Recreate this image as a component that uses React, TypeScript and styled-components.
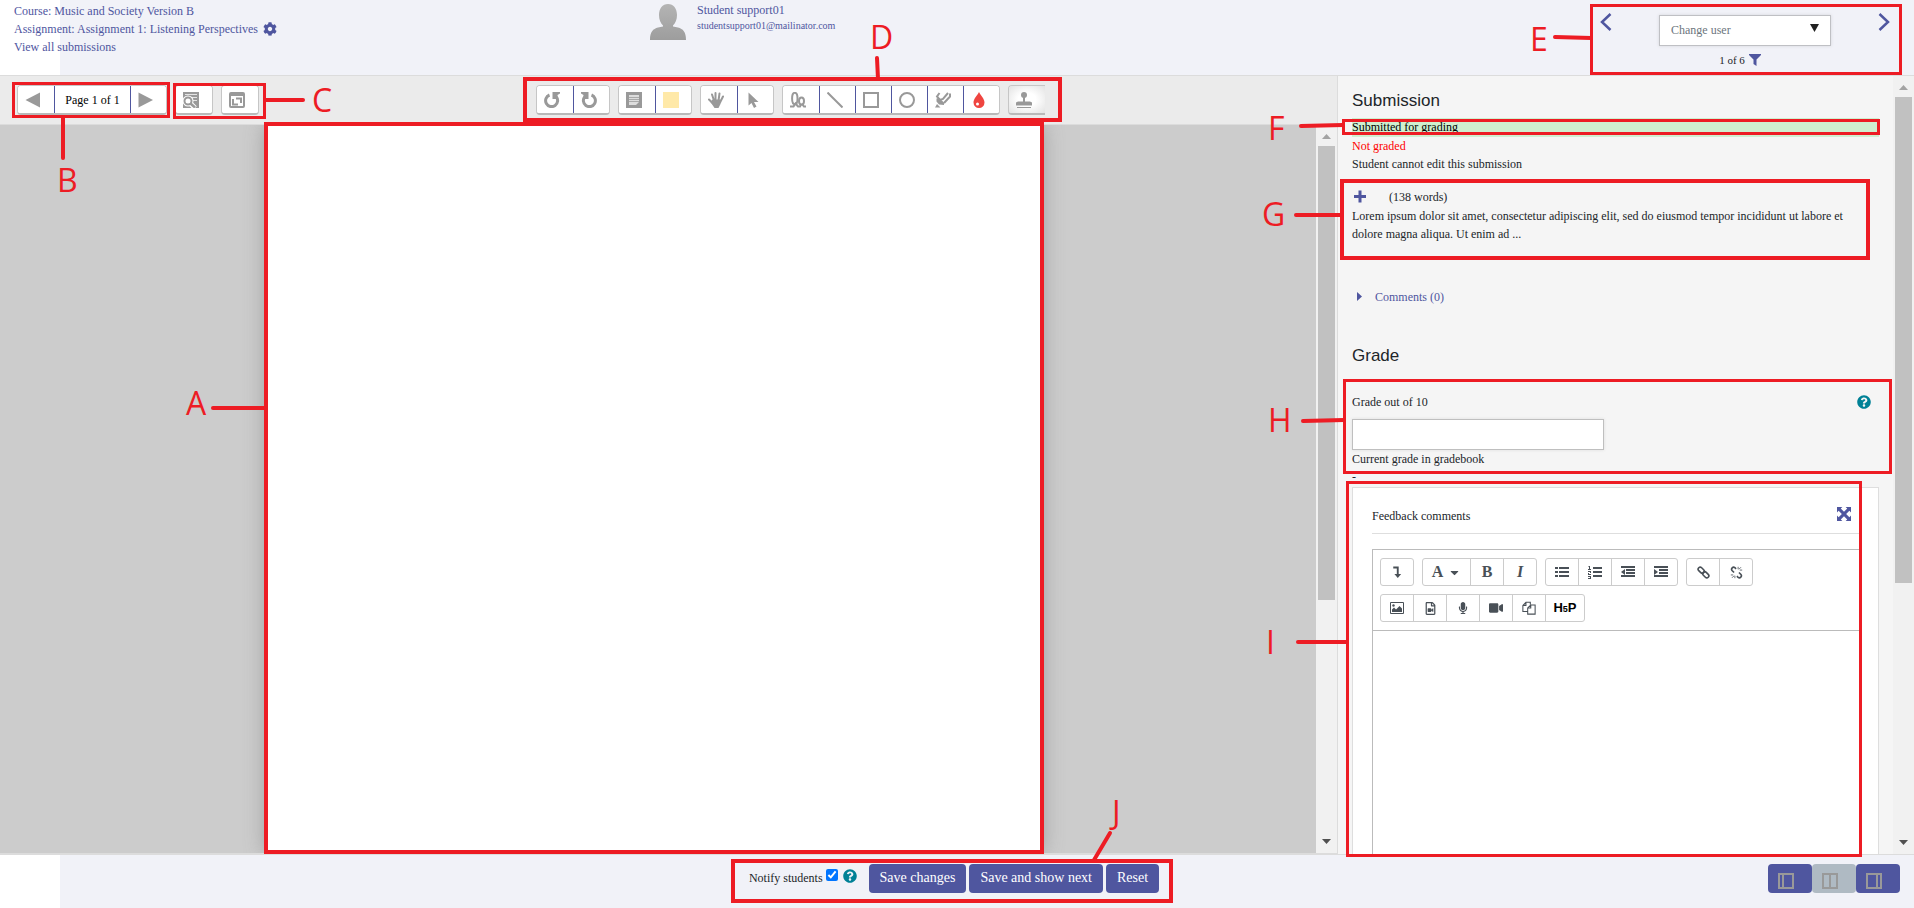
import React from "react";
import styled, { createGlobalStyle, css } from "styled-components";
import {
  FaCog,
  FaFilter,
  FaQuestionCircle,
  FaMicrophone,
  FaVideo,
  FaRegFileVideo,
  FaCaretDown,
  FaCaretRight,
} from "react-icons/fa";

const SERIF = `"Liberation Serif", "Times New Roman", serif`;
const INDIGO = "#4f569f";
const RED = "#ed1c24";

const GlobalStyle = createGlobalStyle`
  *, *::before, *::after { box-sizing: border-box; }
  body {
    margin: 0;
    font: 12px/18px ${SERIF};
    color: #212529;
    background: #fff;
  }
  a { color: ${INDIGO}; text-decoration: none; }
  button, input, select { font: inherit; margin: 0; }
  h2, p { margin: 0; }
  svg { display: block; flex: none; }
`;

/* ---------- Page frame ---------- */

const Page = styled.div`
  position: relative;
  display: flex;
  flex-direction: column;
  height: 100vh;
  overflow: hidden;
`;

const barFill = css`
  background: linear-gradient(to right, #fff 60px, #f1f2f8 60px);
`;

const Header = styled.header`
  ${barFill}
  display: grid;
  grid-template-columns: repeat(3, 1fr);
  height: 76px;
  flex: none;
  border-bottom: 1px solid #dcdcdc;
`;

const Crumbs = styled.nav`
  display: flex;
  flex-direction: column;
  padding: 2px 0 0 14px;
`;

const CrumbRow = styled.div`
  display: flex;
  align-items: center;
  gap: 5px;
  height: 18px;
`;

const Student = styled.div`
  display: flex;
  gap: 11px;
  padding: 4px 0 0 12px;
`;

const StudentText = styled.div`
  display: flex;
  flex-direction: column;
  margin-top: -3px;
`;

const Email = styled.a`
  font-size: 10px;
  line-height: 14px;
`;

const UserNav = styled.div`
  display: flex;
  justify-content: space-between;
  justify-self: end;
  width: 290px;
  margin-right: 24px;
  padding-top: 12px;
`;

const IconLink = styled.a`
  display: block;
  height: max-content;
`;

const Picker = styled.div`
  display: flex;
  flex-direction: column;
  align-items: center;
  margin-top: 3px;
`;

const SelectWrap = styled.div`
  position: relative;
  display: flex;
  width: 172px;
`;

const UserSelect = styled.select`
  appearance: none;
  width: 100%;
  height: 31px;
  padding: 0 11px 1px;
  border: 1px solid #bfc0c4;
  border-radius: 0;
  background: #fff;
  box-shadow: 0 0 3px #d4d4da;
  color: #6c757d;
`;

const SelectArrow = styled.svg`
  position: absolute;
  right: 12px;
  top: 9px;
  pointer-events: none;
`;

const Counter = styled.div`
  display: flex;
  align-items: center;
  gap: 4px;
  margin: 5px 10px 0 0;
  font-size: 11px;
`;

/* ---------- Main split ---------- */

const Main = styled.main`
  display: grid;
  grid-template-columns: minmax(0, 1fr) 577px;
  flex: 1;
  min-height: 0;
`;

const Viewer = styled.section`
  display: flex;
  flex-direction: column;
  min-height: 0;
`;

const Toolbar = styled.div`
  display: grid;
  grid-template-columns: 40% 1fr;
  align-items: center;
  height: 49px;
  flex: none;
  background: #ebebeb;
  border-bottom: 1px solid #dcdcdc;
`;

const Tools = styled.div<{ $inset: number }>`
  display: flex;
  gap: 8px;
  padding-left: ${(p) => p.$inset}px;
`;

const Group = styled.div<{ $open?: boolean }>`
  display: flex;
  height: 30px;
  border: 1px solid #c6c6c6;
  border-bottom: 2px solid #b9b9b9;
  border-radius: 4px;
  background: #fff;
  overflow: hidden;
  && > * + * { border-left: 1px solid ${INDIGO}; }
  ${(p) => p.$open && "border-right: 0; border-radius: 4px 0 0 4px;"}
`;

const Tool = styled.button<{ $pressed?: boolean }>`
  display: flex;
  align-items: center;
  width: 36px;
  padding: 0 0 0 7px;
  border: 0;
  background: ${(p) => (p.$pressed ? "radial-gradient(#fff 35%, #e2e2e2)" : "#fff")};
  color: #999;
`;

const PageLabel = styled.span`
  display: flex;
  align-items: center;
  justify-content: center;
  width: 76px;
  color: #000;
`;

const Workspace = styled.div`
  display: flex;
  flex: 1;
  min-height: 0;
  border-bottom: 1px solid #dcdcdc;
`;

const Desk = styled.div`
  display: flex;
  justify-content: center;
  flex: 1;
  padding-right: 8px;
  background: #ccc;
  overflow: hidden;
`;

const Sheet = styled.div`
  width: 776px;
  background: #fff;
  box-shadow: 0 0 20px #999;
`;

const Scroll = styled.div`
  display: flex;
  flex-direction: column;
  align-items: center;
  width: 21px;
  flex: none;
  padding: 9px 0;
  background: #f1f1f1;
`;

const Thumb = styled.div<{ $share: number }>`
  width: 17px;
  height: ${(p) => p.$share}%;
  margin: 7px 0 auto;
  background: #c1c1c1;
`;

/* ---------- Grading panel ---------- */

const Side = styled.aside`
  display: flex;
  min-height: 0;
  border-left: 1px solid #dcdcdc;
  background: #f5f5f5;
  overflow: hidden;
`;

const SideBody = styled.div`
  flex: 1;
  padding: 15px 14px 0 14px;
  overflow: hidden;
`;

const Heading = styled.h2`
  font: 400 17px/20px "Liberation Sans", Arial, sans-serif;
`;

const Status = styled.p<{ $tone?: "ok" | "bad" }>`
  ${(p) => p.$tone === "ok" && "margin-top: 7px; padding-bottom: 1px; background: #cfefcf; color: #000;"}
  ${(p) => p.$tone === "bad" && "color: #f00;"}
`;

const WordCount = styled.div`
  display: flex;
  align-items: center;
  gap: 23px;
  height: 20px;
  margin-top: 14px;
  padding-left: 2px;
`;

const Excerpt = styled.p`
  padding-right: 24px;
`;

const CommentsLink = styled.a`
  display: flex;
  align-items: center;
  gap: 9px;
  margin: 45px 0 40px;
  padding-left: 4px;
`;

const GradeRow = styled.div`
  display: flex;
  align-items: center;
  justify-content: space-between;
  height: 18px;
  margin: 27px 8px 8px 0;
`;

const HelpLink = styled.a`
  color: #008196;
`;

const GradeInput = styled.input`
  display: block;
  width: 252px;
  height: 31px;
  padding: 0 8px;
  border: 1px solid #bfbfbf;
  background: #fff;
  box-shadow: 0 0 3px #ddd;
`;

const Card = styled.section`
  margin-top: 1px;
  padding: 19px 18px 0 19px;
  border: 1px solid #dedede;
  background: #fff;
`;

const CardHead = styled.div`
  display: flex;
  justify-content: space-between;
  height: 27px;
  padding: 0 9px 0 0;
  border-bottom: 1px solid #dedede;
`;

const Editor = styled.div`
  margin-top: 15px;
  border: 1px solid #bbb;
`;

const EditorBar = styled.div`
  display: flex;
  flex-direction: column;
  gap: 8px;
  height: 81px;
  padding: 8px 7px;
  border-bottom: 1px solid #bbb;
`;

const EditorRow = styled.div`
  display: flex;
  gap: 8px;
`;

const EditorGroup = styled.div`
  display: flex;
  height: 28px;
  border: 1px solid #ccc;
  border-radius: 3px;
  && > * + * { border-left: 1px solid #ccc; }
`;

const EditorButton = styled.button<{ $wide?: number }>`
  display: flex;
  align-items: center;
  justify-content: center;
  gap: 5px;
  width: ${(p) => p.$wide ?? 33}px;
  padding: 0;
  border: 0;
  background: none;
  color: #495057;
  &:first-child { width: ${(p) => p.$wide ?? 32}px; }
`;

const Glyph = styled.span<{ $italic?: boolean }>`
  font-size: 16px;
  font-weight: 700;
  font-style: ${(p) => (p.$italic ? "italic" : "normal")};
`;

const H5P = styled.span`
  font: 900 13px/18px "Liberation Sans", Arial, sans-serif;
  color: #000;
  & > small { font-size: 9px; }
`;

const EditorText = styled.div`
  height: 320px;
  outline: 0;
`;

/* ---------- Footer ---------- */

const Footer = styled.footer`
  ${barFill}
  display: grid;
  grid-template-columns: 1fr auto 1fr;
  align-items: start;
  height: 54px;
  flex: none;
  padding: 9px 14px 0 8px;
  border-top: 1px solid #dcdcdc;
`;

const Actions = styled.div`
  grid-column: 2;
  display: flex;
  gap: 3px;
`;

const Notify = styled.div`
  display: flex;
  gap: 5px;
  padding: 5px 9px 0 0;
`;

const NotifyLabel = styled.label`
  display: flex;
  gap: 3px;
`;

const Tick = styled.input`
  width: 12px;
  height: 12px;
  accent-color: #0075ff;
`;

const Primary = styled.button`
  height: 29px;
  padding: 0 11px 1px;
  border: 0;
  border-radius: 4px;
  background: ${INDIGO};
  color: #fff;
  font-size: 14px;
`;

const Layouts = styled.div`
  display: flex;
  justify-self: end;
`;

const LayoutButton = styled.button<{ $current?: boolean }>`
  display: flex;
  align-items: center;
  width: 44px;
  height: 29px;
  padding: 4px 0 0 10px;
  border: 0;
  border-radius: 4px;
  background: ${(p) => (p.$current ? "#afbac3" : INDIGO)};
  color: #999;
`;

/* ---------- Callouts ---------- */

const Callouts = styled.div`
  position: absolute;
  inset: 0;
  overflow: hidden;
  pointer-events: none;
`;

const Leaders = styled.svg`
  position: absolute;
  left: 0;
  top: 0;
`;

type Box = [x: number, y: number, w: number, h: number, stroke: number];

const Frame = styled.div<{ $box: Box }>`
  position: absolute;
  left: ${(p) => p.$box[0]}px;
  top: ${(p) => p.$box[1]}px;
  width: ${(p) => p.$box[2]}px;
  height: ${(p) => p.$box[3]}px;
  border: ${(p) => p.$box[4]}px solid ${RED};
`;

const Letter = styled.span<{ $x: number; $y: number }>`
  position: absolute;
  left: ${(p) => p.$x}px;
  top: ${(p) => p.$y}px;
  font: 400 32px/32px "Open Sans", "Noto Sans", sans-serif;
  color: ${RED};
`;

const callouts: {
  name: string;
  box: Box;
  letter: [number, number];
  line: [number, number, number, number];
}[] = [
  { name: "A", box: [264, 122, 780, 732, 4], letter: [186, 387], line: [213, 408, 266, 408] },
  { name: "B", box: [12, 82, 158, 36, 3], letter: [57, 164], line: [63, 117, 63, 158] },
  { name: "C", box: [173, 83, 93, 36, 3], letter: [312, 84], line: [265, 100, 303, 100] },
  { name: "D", box: [523, 77, 539, 45, 4], letter: [870, 21], line: [877, 58, 878, 79] },
  { name: "E", box: [1590, 4, 312, 71, 3], letter: [1530, 23], line: [1555, 37, 1591, 38] },
  { name: "F", box: [1342, 119, 538, 16, 3], letter: [1268, 112], line: [1301, 126, 1343, 125] },
  { name: "G", box: [1340, 179, 530, 81, 4], letter: [1262, 198], line: [1296, 215, 1342, 215] },
  { name: "H", box: [1343, 379, 549, 95, 3], letter: [1268, 404], line: [1303, 421, 1344, 420] },
  { name: "I", box: [1346, 481, 516, 376, 3], letter: [1266, 626], line: [1298, 642, 1347, 642] },
  { name: "J", box: [731, 859, 442, 44, 4], letter: [1112, 796], line: [1110, 833, 1094, 860] },
];

/* ---------- Small drawings ---------- */

const Ico = ({ children, size = 16 }: { children: React.ReactNode; size?: number }) => (
  <svg width={size} height={size} viewBox="0 0 16 16" fill="none" stroke="currentColor" aria-hidden>
    {children}
  </svg>
);

const TextIcon = ({ lines, fill }: { lines: string; fill?: string }) => (
  <svg width="14" height="13" viewBox="0 0 14 13" fill="none" stroke="currentColor" aria-hidden>
    <path d={lines} strokeWidth="2" />
    {fill && <path d={fill} fill="currentColor" stroke="none" />}
  </svg>
);

const Triangle = ({ d, fill }: { d: string; fill: string }) => (
  <svg width="9" height="5" viewBox="0 0 9 5" aria-hidden>
    <path d={d} fill={fill} />
  </svg>
);

const Avatar = () => (
  <svg width="36" height="36" viewBox="0 0 36 36" role="img" aria-label="Student picture">
    <defs>
      <linearGradient id="avatar" x1="0" y1="0" x2="0" y2="1">
        <stop offset="0" stopColor="#b4b4b4" />
        <stop offset="1" stopColor="#9d9d9d" />
      </linearGradient>
    </defs>
    <path
      fill="url(#avatar)"
      d="M18 0c5.500 0 9 4.500 9 11 0 4.500-1.500 8-4 10.500v1l5 1c5 1.500 8 4 8 12.500H0c0-8.500 3-11 8-12.500l5-1v-1c-2.500-2.500-4-6-4-10.500C9 4.500 12.500 0 18 0z"
    />
  </svg>
);

const Chevron = ({ d }: { d: string }) => (
  <svg width="12" height="20" viewBox="0 0 12 20" fill="none" stroke={INDIGO} strokeWidth="2.500" aria-hidden>
    <path d={d} />
  </svg>
);

const Expand = () => (
  <svg width="14" height="14" viewBox="0 0 13 13" fill="currentColor" aria-hidden>
    <path d="M0 0h5L3.500 1.500 6.500 4.500 9.500 1.500 8 0h5v5l-1.500-1.500-3 3 3 3L13 8v5H8l1.500-1.500-3-3-3 3L5 13H0V8l1.500 1.500 3-3-3-3L0 5z" />
  </svg>
);

const ScrollBar = ({ share }: { share: number }) => (
  <Scroll>
    <Triangle d="M4.500 0L9 5H0z" fill="#a3a3a3" />
    <Thumb $share={share} />
    <Triangle d="M0 0h9L4.500 5z" fill="#505050" />
  </Scroll>
);

const Help = () => (
  <HelpLink href="#help" aria-label="Help">
    <FaQuestionCircle size={14} />
  </HelpLink>
);

/* ---------- Sections ---------- */

const PageHeader = () => (
  <Header>
    <Crumbs>
      <CrumbRow>
        <a href="#course">Course: Music and Society Version B</a>
      </CrumbRow>
      <CrumbRow>
        <a href="#assignment">Assignment: Assignment 1: Listening Perspectives</a>
        <a href="#settings" aria-label="Settings">
          <FaCog size={14} />
        </a>
      </CrumbRow>
      <CrumbRow>
        <a href="#submissions">View all submissions</a>
      </CrumbRow>
    </Crumbs>
    <Student>
      <Avatar />
      <StudentText>
        <a href="#student">Student support01</a>
        <Email href="#mail">studentsupport01@mailinator.com</Email>
      </StudentText>
    </Student>
    <UserNav>
      <IconLink href="#previous" aria-label="Previous user">
        <Chevron d="M10.500 2L2 10l8.500 8" />
      </IconLink>
      <Picker>
        <SelectWrap>
          <UserSelect aria-label="Change user" defaultValue="">
            <option value="">Change user</option>
          </UserSelect>
          <SelectArrow width="9" height="8" viewBox="0 0 9 8" aria-hidden>
            <path d="M0 0h9L4.500 8z" fill="#212121" />
          </SelectArrow>
        </SelectWrap>
        <Counter>
          <span>1 of 6</span>
          <a href="#filter" aria-label="Filter">
            <svg width="12" height="12" viewBox="0 0 12 12" fill="currentColor" aria-hidden>
              <path d="M0 0h12v1L7.500 5.500V12L4.500 10V5.500L0 1z" />
            </svg>
          </a>
        </Counter>
      </Picker>
      <IconLink href="#next" aria-label="Next user">
        <Chevron d="M1.500 2L10 10l-8.500 8" />
      </IconLink>
    </UserNav>
  </Header>
);

const ViewerToolbar = () => (
  <Toolbar>
    <Tools $inset={17}>
      <Group>
        <Tool aria-label="Previous page">
          <Ico><path d="M15 0.500v15L0.500 8z" fill="currentColor" stroke="none" /></Ico>
        </Tool>
        <PageLabel>Page 1 of 1</PageLabel>
        <Tool aria-label="Next page">
          <Ico><path d="M0.500 0.500v15L15 8z" fill="currentColor" stroke="none" /></Ico>
        </Tool>
      </Group>
      <Group>
        <Tool aria-label="Search comments">
          <Ico>
            <path d="M0 0h16v16H0z" fill="currentColor" stroke="none" />
            <path d="M2 2.500h12M7 5.500h7M10 8.500h4" stroke="#e4e4e4" />
            <path d="M8 12l4 4" stroke="#fff" strokeWidth="5" />
            <circle cx="5" cy="9" r="5.500" fill="#fff" stroke="none" />
            <circle cx="5" cy="9" r="3.500" strokeWidth="2" fill="#fff" />
            <path d="M7.500 11.500L12 15.500" strokeWidth="2.500" />
          </Ico>
        </Tool>
      </Group>
      <Group>
        <Tool aria-label="Expand toolbar">
          <Ico>
            <rect x="1" y="1" width="14" height="14" rx="1" strokeWidth="2" />
            <path d="M1 2.500h14" strokeWidth="3" />
            <path d="M4 7v5.500h5M12 11V6.500H7" strokeWidth="2" />
          </Ico>
        </Tool>
      </Group>
    </Tools>
    <Tools $inset={1}>
      <Group>
        <Tool aria-label="Rotate left">
          <Ico>
            <path d="M5.500 3A6 6 0 1 0 12 4.500" strokeWidth="3" />
            <path d="M8.500 0H16v1.500L13.500 3v4h-5z" fill="currentColor" stroke="none" />
          </Ico>
        </Tool>
        <Tool aria-label="Rotate right">
          <Ico>
            <path d="M10.500 3A6 6 0 1 1 4 4.500" strokeWidth="3" />
            <path d="M7.500 0H0v1.500L2.500 3v4h5z" fill="currentColor" stroke="none" />
          </Ico>
        </Tool>
      </Group>
      <Group>
        <Tool aria-label="Comment">
          <Ico>
            <path d="M0 0h16v16H0z" fill="currentColor" stroke="none" />
            <path d="M3 3h10v7l-3 3H3z" fill="#ddd" stroke="none" />
            <path d="M3 5.500h10M3 7.500h10M3 9.500h10" stroke="#aaa" />
          </Ico>
        </Tool>
        <Tool aria-label="Comment colour">
          <Ico><path d="M0 0h16v16H0z" fill="#ffe9a8" stroke="none" /></Ico>
        </Tool>
      </Group>
      <Group>
        <Tool aria-label="Drag">
          <Ico>
            <path d="M1 7.500l4 4M4 2.500l2 6M7.500 1v7M11.500 1.500l-1 7M15 4.500l-3 6" strokeWidth="2" strokeLinecap="round" />
            <path d="M4.500 7.500h8L12.500 12l-2 4H6.500L2.500 10z" fill="currentColor" stroke="none" />
          </Ico>
        </Tool>
        <Tool aria-label="Select">
          <Ico>
            <path d="M3.500 0.500v13L6.500 11l2.500 5 2.500-1.500L9 10h4.500z" fill="currentColor" stroke="none" />
          </Ico>
        </Tool>
      </Group>
      <Group>
        <Tool aria-label="Pen">
          <Ico>
            <ellipse cx="4.800" cy="6.500" rx="2.700" ry="5.700" strokeWidth="2" />
            <ellipse cx="11.500" cy="9" rx="2.500" ry="3.500" strokeWidth="2" />
            <path d="M0 14.500h3.500l2-3 2.500 3h2l1-2M12 12l2 2.500h2" strokeWidth="2" />
          </Ico>
        </Tool>
        <Tool aria-label="Line">
          <Ico><path d="M0.500 0.500l15 15" strokeWidth="2" /></Ico>
        </Tool>
        <Tool aria-label="Rectangle">
          <Ico><rect x="1" y="1" width="14" height="14" strokeWidth="2" /></Ico>
        </Tool>
        <Tool aria-label="Oval">
          <Ico><circle cx="8" cy="8" r="7" strokeWidth="2" /></Ico>
        </Tool>
        <Tool aria-label="Highlight">
          <Ico>
            <path d="M4.500 1L2 4.500 5 8l3-1 5-6M15 1.500v3L9 11" strokeWidth="2" />
            <path d="M1.500 6.500L4 6l5 4.500V13l-5-0.500-2.500-3zM0 15.500L2 12l3.500 3.500z" fill="currentColor" stroke="none" />
          </Ico>
        </Tool>
        <Tool aria-label="Annotation colour">
          <Ico>
            <path d="M8 0c1.500 3.500 5.500 6.500 5.500 10.500a5.500 5.500 0 0 1-11 0C2.500 6.500 6.500 3.500 8 0z" fill="#ef4540" stroke="none" />
            <circle cx="6.500" cy="12" r="1.500" fill="#fff" stroke="none" />
          </Ico>
        </Tool>
      </Group>
      <Group $open>
        <Tool aria-label="Stamp" $pressed>
          <Ico>
            <circle cx="8" cy="3" r="3" fill="currentColor" stroke="none" />
            <path d="M8 4v6" strokeWidth="2" />
            <path d="M2 9.500h12l2 1v3H0v-3z" fill="currentColor" stroke="none" />
            <path d="M1 15.500h14" />
          </Ico>
        </Tool>
      </Group>
    </Tools>
  </Toolbar>
);

const FeedbackEditor = () => (
  <Editor>
    <EditorBar>
      <EditorRow>
        <EditorGroup>
          <EditorButton aria-label="Show more buttons">
            <Ico size={12}>
              <path d="M3 2h6v10" strokeWidth="2.500" />
              <path d="M4.500 10.500h9L9 16z" fill="currentColor" stroke="none" />
            </Ico>
          </EditorButton>
        </EditorGroup>
        <EditorGroup>
          <EditorButton $wide={47} aria-label="Paragraph styles">
            <Glyph>A</Glyph>
            <FaCaretDown size={13} />
          </EditorButton>
          <EditorButton aria-label="Bold"><Glyph>B</Glyph></EditorButton>
          <EditorButton aria-label="Italic"><Glyph $italic>I</Glyph></EditorButton>
        </EditorGroup>
        <EditorGroup>
          <EditorButton aria-label="Unordered list">
            <TextIcon lines="M4 2h10M4 6h10M4 10h10M0 2h3M0 6h3M0 10h3" />
          </EditorButton>
          <EditorButton aria-label="Ordered list">
            <TextIcon
              lines="M5 2h9M5 6h9M5 10h9"
              fill="M1 0h1v3h1v1H0V3h1V1H0zM0 5h3v2H1v1h2v1H0V7h2V6H0zM0 10h3v3H0v-1h2v-1H0z"
            />
          </EditorButton>
          <EditorButton aria-label="Outdent">
            <TextIcon lines="M0 1h14M5 4h9M5 7h9M0 10h14" fill="M4 3v6L0 6z" />
          </EditorButton>
          <EditorButton aria-label="Indent">
            <TextIcon lines="M0 1h14M5 4h9M5 7h9M0 10h14" fill="M0 3v6l4-3z" />
          </EditorButton>
        </EditorGroup>
        <EditorGroup>
          <EditorButton aria-label="Link">
            <Ico size={13}>
              <rect x="1" y="2.500" width="8.500" height="5" rx="2.500" transform="rotate(45 5 5)" strokeWidth="2" />
              <rect x="6.500" y="8.500" width="8.500" height="5" rx="2.500" transform="rotate(45 11 11)" strokeWidth="2" />
            </Ico>
          </EditorButton>
          <EditorButton aria-label="Unlink">
            <Ico size={13}>
              <path d="M7.500 3.500L6 2a2.500 2.500 0 0 0-3.500 3.500L5 8M8.500 12.500L10 14a2.500 2.500 0 0 0 3.500-3.500L11 8" strokeWidth="2" />
              <path d="M10 1v3M12 5h3M11 4l2.500-2.500M6 12v3M1 11h3M2.500 14.500L5 12" />
            </Ico>
          </EditorButton>
        </EditorGroup>
      </EditorRow>
      <EditorRow>
        <EditorGroup>
          <EditorButton aria-label="Image">
            <Ico>
              <path d="M1.500 2.500h13v11h-13z" />
              <path d="M3 12V9.500l2-2 2 2 3.500-3.500L13 8.500V12z" fill="currentColor" stroke="none" />
              <circle cx="4.500" cy="5.500" r="1.200" fill="currentColor" stroke="none" />
            </Ico>
          </EditorButton>
          <EditorButton aria-label="Media"><FaRegFileVideo size={13} /></EditorButton>
          <EditorButton aria-label="Record audio"><FaMicrophone size={12} /></EditorButton>
          <EditorButton aria-label="Record video"><FaVideo size={14} /></EditorButton>
          <EditorButton aria-label="Manage files">
            <Ico size={14}>
              <path d="M6.500 12H1V5l3.500-3.500H9.500V4M4.500 1.500V5H1M6.500 15V8L10 4.500h5V15zM10 4.500V8H6.500" strokeWidth="1.200" />
            </Ico>
          </EditorButton>
          <EditorButton $wide={39} aria-label="Insert H5P">
            <H5P>
              H<small>5</small>P
            </H5P>
          </EditorButton>
        </EditorGroup>
      </EditorRow>
    </EditorBar>
    <EditorText contentEditable suppressContentEditableWarning role="textbox" aria-label="Feedback comments" />
  </Editor>
);

const GradingPanel = () => (
  <Side>
    <SideBody>
      <Heading>Submission</Heading>
      <Status $tone="ok">Submitted for grading</Status>
      <Status $tone="bad">Not graded</Status>
      <Status>Student cannot edit this submission</Status>
      <WordCount>
        <a href="#full" aria-label="View full">
          <svg width="12" height="14" viewBox="0 0 12 14" fill="none" stroke="currentColor" strokeWidth="3" aria-hidden>
            <path d="M0 6.500h12M6 0.500v12" />
          </svg>
        </a>
        <span>(138 words)</span>
      </WordCount>
      <Excerpt>
        Lorem ipsum dolor sit amet, consectetur adipiscing elit, sed do eiusmod tempor incididunt ut labore et dolore
        magna aliqua. Ut enim ad ...
      </Excerpt>
      <CommentsLink href="#comments">
        <svg width="10" height="10" viewBox="0 0 10 10" aria-hidden>
          <path d="M1 0l5 4.500L1 9z" fill="currentColor" />
        </svg>
        <span>Comments (0)</span>
      </CommentsLink>
      <Heading>Grade</Heading>
      <GradeRow>
        <label htmlFor="grade">Grade out of 10</label>
        <Help />
      </GradeRow>
      <GradeInput id="grade" type="text" />
      <p>Current grade in gradebook</p>
      <p>-</p>
      <Card>
        <CardHead>
          <span>Feedback comments</span>
          <a href="#expand" aria-label="Expand">
            <Expand />
          </a>
        </CardHead>
        <FeedbackEditor />
      </Card>
    </SideBody>
    <ScrollBar share={64} />
  </Side>
);

const PageFooter = () => (
  <Footer>
    <Actions>
      <Notify>
        <NotifyLabel>
          Notify students
          <Tick type="checkbox" defaultChecked />
        </NotifyLabel>
        <Help />
      </Notify>
      <Primary>Save changes</Primary>
      <Primary>Save and show next</Primary>
      <Primary>Reset</Primary>
    </Actions>
    <Layouts>
      <LayoutButton aria-label="Collapse grade panel">
        <Ico><path d="M1 1h14v14H1zM5 1v14" strokeWidth="2" /></Ico>
      </LayoutButton>
      <LayoutButton $current aria-label="Show both panels">
        <Ico><path d="M1 1h14v14H1zM8 1v14" strokeWidth="2" /></Ico>
      </LayoutButton>
      <LayoutButton aria-label="Collapse review panel">
        <Ico><path d="M1 1h14v14H1zM11 1v14" strokeWidth="2" /></Ico>
      </LayoutButton>
    </Layouts>
  </Footer>
);

export default function App() {
  return (
    <Page>
      <GlobalStyle />
      <PageHeader />
      <Main>
        <Viewer>
          <ViewerToolbar />
          <Workspace>
            <Desk>
              <Sheet />
            </Desk>
            <ScrollBar share={64} />
          </Workspace>
        </Viewer>
        <GradingPanel />
      </Main>
      <PageFooter />
      <Callouts>
        <Leaders width="100%" height="100%" stroke={RED} strokeWidth="4" strokeLinecap="round" aria-hidden>
          {callouts.map(({ name, line: [x1, y1, x2, y2] }) => (
            <line key={name} x1={x1} y1={y1} x2={x2} y2={y2} />
          ))}
        </Leaders>
        {callouts.map(({ name, box, letter }) => (
          <React.Fragment key={name}>
            <Frame $box={box} />
            <Letter $x={letter[0]} $y={letter[1]}>
              {name}
            </Letter>
          </React.Fragment>
        ))}
      </Callouts>
    </Page>
  );
}
